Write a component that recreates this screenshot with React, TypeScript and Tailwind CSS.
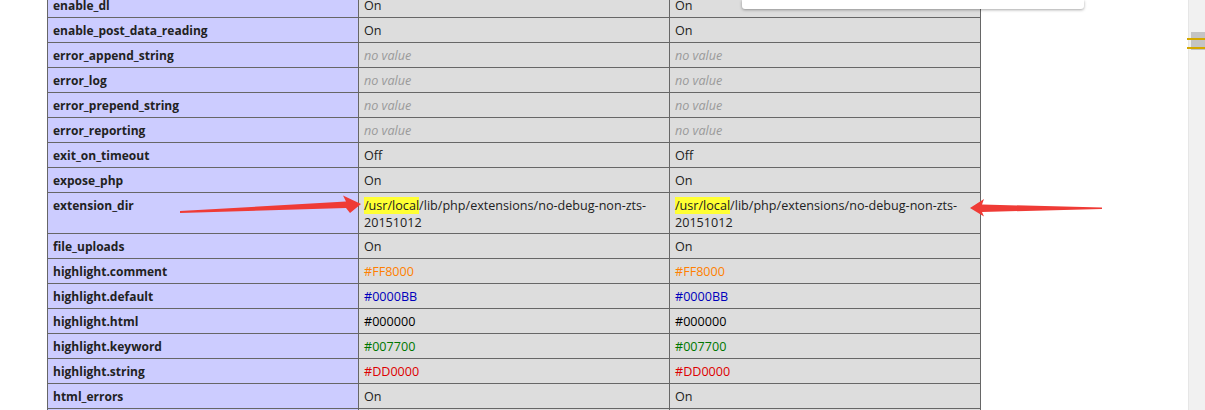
import React from "react";

type Row = { k: string; v: React.ReactNode; kind?: "nv" | "dir" | "color"; color?: string };

const rows: Row[] = [
  { k: "enable_dl", v: "On" },
  { k: "enable_post_data_reading", v: "On" },
  { k: "error_append_string", v: "no value", kind: "nv" },
  { k: "error_log", v: "no value", kind: "nv" },
  { k: "error_prepend_string", v: "no value", kind: "nv" },
  { k: "error_reporting", v: "no value", kind: "nv" },
  { k: "exit_on_timeout", v: "Off" },
  { k: "expose_php", v: "On" },
  { k: "extension_dir", v: "", kind: "dir" },
  { k: "file_uploads", v: "On" },
  { k: "highlight.comment", v: "#FF8000", kind: "color", color: "#FF8000" },
  { k: "highlight.default", v: "#0000BB", kind: "color", color: "#0000BB" },
  { k: "highlight.html", v: "#000000", kind: "color", color: "#000000" },
  { k: "highlight.keyword", v: "#007700", kind: "color", color: "#007700" },
  { k: "highlight.string", v: "#DD0000", kind: "color", color: "#DD0000" },
  { k: "html_errors", v: "On" },
  { k: "ignore_repeated_errors", v: "Off" },
];

function Value({ r }: { r: Row }) {
  if (r.kind === "nv") return <i className="text-[#9a9a9a]">no value</i>;
  if (r.kind === "dir")
    return (
      <>
        <span className="bg-[#ffff33]">/usr/local</span>/lib/php/extensions/no-debug-non-zts-
        <br />
        20151012
      </>
    );
  if (r.kind === "color") return <span style={{ color: r.color }}>{r.v}</span>;
  return <>{r.v}</>;
}

export default function App() {
  const base = "border border-[#666] pl-[5px] pr-[5px] pt-[4px] leading-[17px] align-baseline";
  return (
    <div
      className="relative w-[1205px] h-[410px] overflow-hidden bg-white flex text-[12px] text-[#222]"
      style={{ fontFamily: '"Open Sans", "Noto Sans", sans-serif' }}
    >
      <div className="flex-1 overflow-hidden">
        <table className="ml-[47px] mt-[-8px] w-[934px] border-collapse table-fixed">
          <tbody>
            {rows.map((r) => {
              const td = `${base} ${r.kind === "dir" ? "pb-[2px]" : "pb-[3px]"}`;
              return (
                <tr key={r.k}>
                  <td className={`${td} w-[311px] bg-[#ccccff] font-bold`}>{r.k}</td>
                  <td className={`${td} w-[311px] bg-[#dddddd] text-[12.6px]`}>
                    <Value r={r} />
                  </td>
                  <td className={`${td} bg-[#dddddd] text-[12.6px]`}>
                    <Value r={r} />
                  </td>
                </tr>
              );
            })}
          </tbody>
        </table>
      </div>
      <div className="w-[17px] bg-[#f1f1f1] border-l border-[#e6e6e6] flex flex-col">
        <div className="mt-[32px] ml-[2px] h-[18px] bg-[#c4c4c4]" />
      </div>
      {/* search markers */}
      <div className="absolute left-[1187px] top-[38px] w-[18px] h-[2px] bg-[#d4a800]" />
      <div className="absolute left-[1187px] top-[47px] w-[18px] h-[2px] bg-[#d4a800]" />
      {/* popup */}
      <div className="absolute top-0 left-[742px] w-[342px] h-[9px] bg-white rounded-b-[3px] shadow-[0_1px_3px_rgba(0,0,0,0.35)]" />
      {/* arrows */}
      <svg className="absolute inset-0 pointer-events-none" width="1205" height="410">
        <polygon
          points="180,211 346,201.5 343,195.5 361,204 350,213 346,208 180,213"
          fill="#ef3b36"
        />
        <polygon
          points="970,208 984,199 982,204.5 1102,207.5 1102,209 982,212 984,216.5"
          fill="#ef3b36"
        />
      </svg>
    </div>
  );
}
